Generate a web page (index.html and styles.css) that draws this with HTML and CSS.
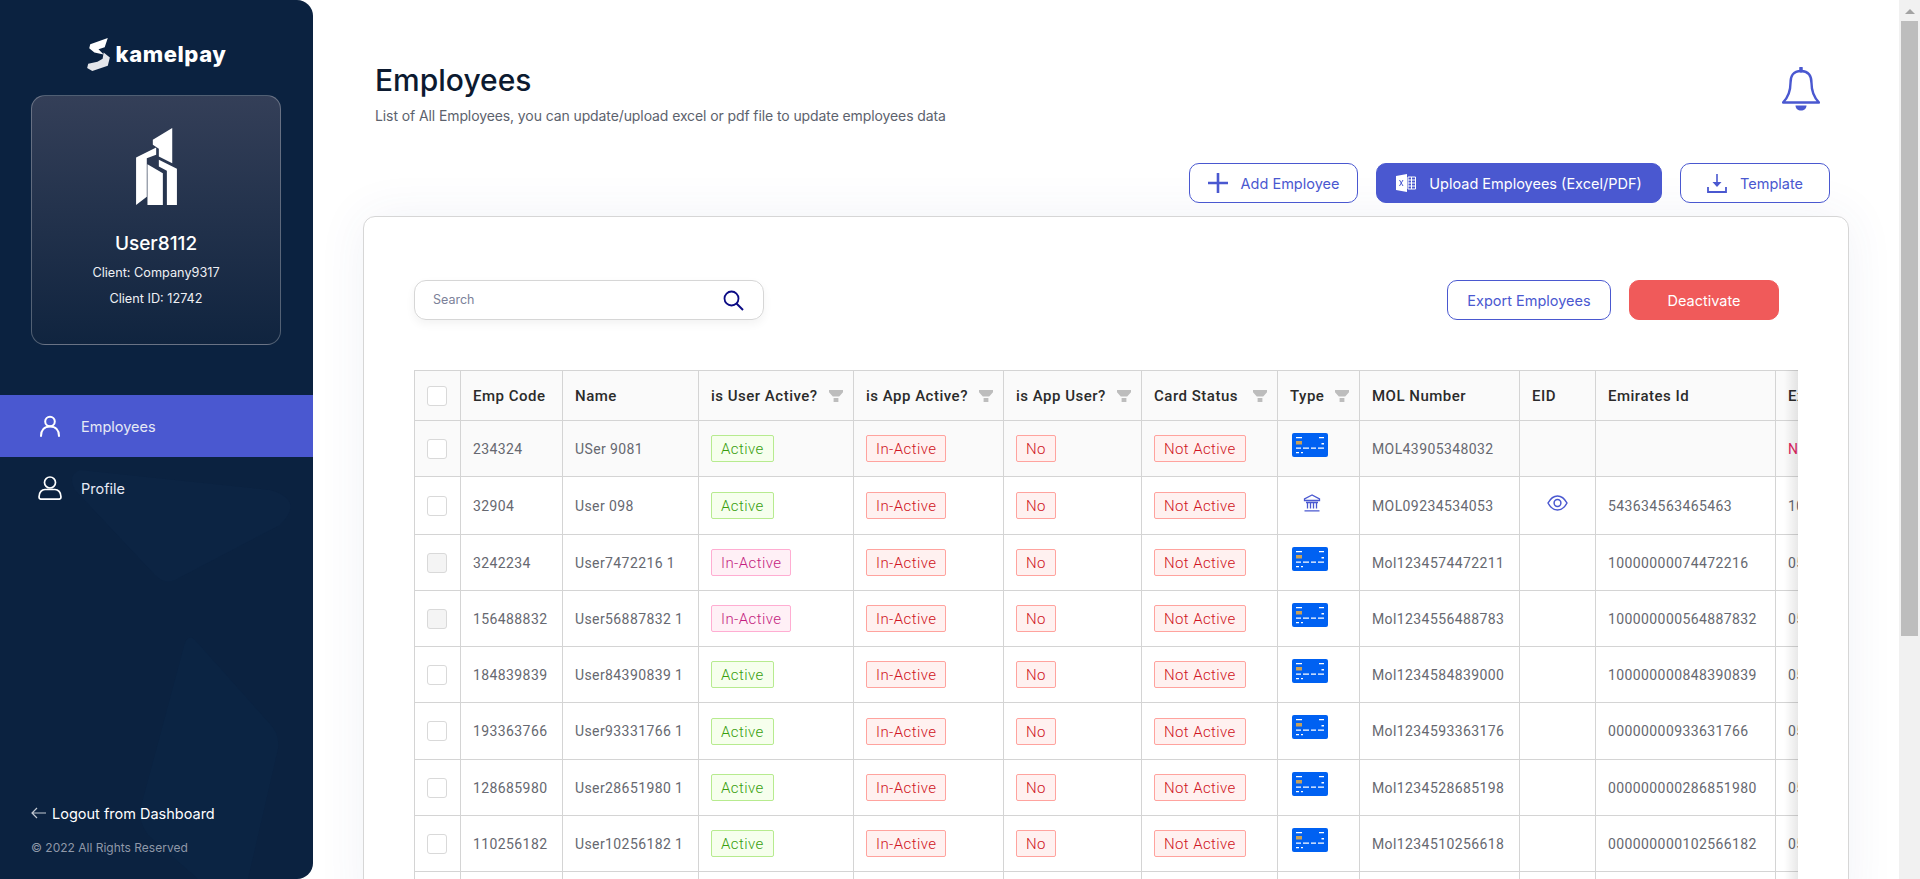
FILE: index.html
```html
<!DOCTYPE html>
<html lang="en">
<head>
  <meta charset="UTF-8">
  <title>Employees - kamelpay</title>
  <link rel="stylesheet" href="styles.css">
</head>
<body>
  <svg class="icon-defs" aria-hidden="true">
    <symbol id="funnel" viewBox="0 0 14 12"><path d="M0 0h14v2.2L10.2 6.6H3.8L0 2.2zM4.6 8h4.8v4H4.6z" fill="#bdbdbd"/></symbol>
    <symbol id="card" viewBox="0 0 36 24">
      <rect width="36" height="24" rx="2" fill="#0061f2"/>
      <path d="M4 4h6v1.2H4zM27 4h5v1.2h-5zM29.500 10h2.500v1.500h-2.500zM4 14.500h5v1.200H4zM11 14.500h6v1.200h-6zM19 14.500h5v1.200h-5zM26 14.500h6v1.200h-6zM4 19h3v1.200H4zM9 19h2v1.200H9z" fill="#fff"/>
      <rect x="4" y="8" width="6" height="3.500" fill="#c9a158"/>
    </symbol>
    <symbol id="bank" viewBox="0 0 18 18">
      <path d="M9 1 1.500 5v1.500h15V5zM3 8.500h12M4.500 8.500v6M7.500 8.500v6M10.500 8.500v6M13.500 8.500v6M1.500 16.800h15" fill="none" stroke="#4a58d0" stroke-width="1.300"/>
    </symbol>
    <symbol id="eye" viewBox="0 0 21 16">
      <path d="M1 8c2.500-4.500 5.700-7 9.500-7s7 2.500 9.500 7c-2.500 4.500-5.700 7-9.500 7S3.500 12.500 1 8z" fill="none" stroke="#4a58d0" stroke-width="1.500"/>
      <circle cx="10.500" cy="8" r="3.400" fill="none" stroke="#4a58d0" stroke-width="1.500"/>
    </symbol>
  </svg>

  <div class="app">
    <aside class="sidebar">
      <svg class="sidebar-bg" viewBox="0 0 313 879" aria-hidden="true">
        <path d="M80 470 270 490q35 10 10 35L175 580q-10 5-20-5L75 490q-8-15 5-20z" fill="#0c2443"/>
        <path d="M195 640q-8-8-12 10L140 810q-2 10 8 25l50 44h50l30-130q2-15-8-25z" fill="#0b2443"/>
      </svg>
      <div class="logo">
        <svg class="logo-mark" viewBox="0 0 22 32">
          <path d="M3 6 20 0l-3 9-6 2 5 5-9-2-5-4z" fill="#fff"/>
          <path d="M16 14l6 5-2 8-15 5-5-3 1-4 9-2 5-3z" fill="#e4e6ea"/>
        </svg>
        <span class="logo-text">kamelpay</span>
      </div>

      <div class="user-card">
        <svg class="building" viewBox="0 0 122 230">
          <path d="M50 35 108 0v105L68 85V62L50 50z" fill="#fff"/>
          <path d="M0 88 60 58v22L32 90v115L0 230z" fill="#fff"/>
          <path d="M34 108l46 27v95H34z" fill="#fff"/>
          <path d="M68 95l54 27v108H92V128l-24-13z" fill="#fff"/>
        </svg>
        <div class="user-name">User8112</div>
        <div class="user-meta">Client: Company9317</div>
        <div class="user-meta">Client ID: 12742</div>
      </div>

      <nav class="nav">
        <a class="nav-item active">
          <svg class="nav-icon" viewBox="0 0 24 24">
            <circle cx="12" cy="7.500" r="4.800" fill="none" stroke="#fff" stroke-width="2"/>
            <path d="M3 22c0-6 3.500-9.500 9-9.500s9 3.500 9 9.500" fill="none" stroke="#fff" stroke-width="2" stroke-linecap="round"/>
          </svg>
          Employees
        </a>
        <a class="nav-item">
          <svg class="nav-icon" viewBox="0 0 24 24">
            <circle cx="12" cy="6.500" r="5.500" fill="none" stroke="#fff" stroke-width="1.700"/>
            <path d="M1 21c0-5 3-7.500 6-7.500h10c3 0 6 2.500 6 7.500 0 1.500-1 2.200-2 2.200H3c-1 0-2-.7-2-2.200z" fill="none" stroke="#fff" stroke-width="1.700"/>
          </svg>
          Profile
        </a>
      </nav>

      <div class="sidebar-foot">
        <a class="logout">
          <svg class="logout-arrow" viewBox="0 0 15 12"><path d="M6 1 1 6l5 5M1 6h14" fill="none" stroke="#c4c9d2" stroke-width="1.200"/></svg>
          Logout from Dashboard
        </a>
        <div class="copyright">© 2022 All Rights Reserved</div>
      </div>
    </aside>

    <main class="main">
      <div class="page-head">
        <div>
          <h1>Employees</h1>
          <p>List of All Employees, you can update/upload excel or pdf file to update employees data</p>
        </div>
        <svg class="bell" viewBox="0 0 38 44">
          <path d="M19 4C11 4 8.500 9 8.500 16c0 8-2 14-7.500 19.500h36C31.500 30 29.500 24 29.500 16 29.500 9 27 4 19 4z" fill="none" stroke="#4a58d0" stroke-width="2.400" stroke-linejoin="round"/>
          <path d="M19 1v3" stroke="#4a58d0" stroke-width="3.500" stroke-linecap="round"/>
          <path d="M13.500 38.500h11c0 3-2.500 5-5.500 5s-5.500-2-5.500-5z" fill="#4a58d0"/>
        </svg>
      </div>

      <div class="page-actions">
        <button class="btn btn-add">
          <svg class="btn-icon" viewBox="0 0 20 20"><path d="M10 0v20M0 10h20" stroke="#4a58d0" stroke-width="2.600"/></svg>
          Add Employee
        </button>
        <button class="btn btn-upload">
          <svg class="btn-icon" viewBox="0 0 20 20">
            <path d="M0 3 11 1v18L0 17z" fill="#fff"/>
            <path d="M3.500 7l3.500 6M7 7l-3.500 6" stroke="#4a58d0" stroke-width="1"/>
            <path d="M12 4h7.500v12H12zM12 7h7.500M12 10h7.500M12 13h7.500M15.500 4v12" fill="none" stroke="#fff" stroke-width="1"/>
          </svg>
          Upload Employees (Excel/PDF)
        </button>
        <button class="btn btn-template">
          <svg class="btn-icon" viewBox="0 0 20 20">
            <path d="M10 1v10" stroke="#4a58d0" stroke-width="1.600"/>
            <path d="M5.500 9h9L10 14z" fill="#4a58d0"/>
            <path d="M1 14v5h18v-5" fill="none" stroke="#4a58d0" stroke-width="1.800"/>
          </svg>
          Template
        </button>
      </div>

      <section class="panel">
        <div class="toolbar">
          <div class="search">
            <input type="text" placeholder="Search">
            <svg class="search-icon" viewBox="0 0 21 21">
              <circle cx="8.500" cy="8.500" r="7" fill="none" stroke="#0b0b85" stroke-width="1.800"/>
              <path d="M13.500 13.500 20 20" stroke="#0b0b85" stroke-width="2"/>
            </svg>
          </div>
          <div class="toolbar-actions">
            <button class="btn btn-export">Export Employees</button>
            <button class="btn btn-danger">Deactivate</button>
          </div>
        </div>

        <div class="table-wrap">
          <table class="emp-table">
            <colgroup>
              <col class="c-check"><col class="c-code"><col class="c-name"><col class="c-user"><col class="c-app"><col class="c-appuser"><col class="c-status"><col class="c-type"><col class="c-mol"><col class="c-eid"><col class="c-emirates"><col class="c-expiry">
            </colgroup>
            <thead>
              <tr>
                <th><span class="check"></span></th>
                <th>Emp Code</th>
                <th>Name</th>
                <th><div class="th-filter">is User Active?<svg class="funnel"><use href="#funnel"/></svg></div></th>
                <th><div class="th-filter">is App Active?<svg class="funnel"><use href="#funnel"/></svg></div></th>
                <th><div class="th-filter">is App User?<svg class="funnel"><use href="#funnel"/></svg></div></th>
                <th><div class="th-filter">Card Status<svg class="funnel"><use href="#funnel"/></svg></div></th>
                <th><div class="th-filter">Type<svg class="funnel"><use href="#funnel"/></svg></div></th>
                <th>MOL Number</th>
                <th>EID</th>
                <th>Emirates Id</th>
                <th>Expiry Date</th>
              </tr>
            </thead>
            <tbody>
              <tr class="row-shaded">
                <td><span class="check"></span></td>
                <td>234324</td>
                <td>USer 9081</td>
                <td><span class="tag tag-green">Active</span></td>
                <td><span class="tag tag-red">In-Active</span></td>
                <td><span class="tag tag-red">No</span></td>
                <td><span class="tag tag-red">Not Active</span></td>
                <td><svg class="card-icon"><use href="#card"/></svg></td>
                <td>MOL43905348032</td>
                <td></td>
                <td></td>
                <td class="missing">Not Added</td>
              </tr>
              <tr>
                <td><span class="check"></span></td>
                <td>32904</td>
                <td>User 098</td>
                <td><span class="tag tag-green">Active</span></td>
                <td><span class="tag tag-red">In-Active</span></td>
                <td><span class="tag tag-red">No</span></td>
                <td><span class="tag tag-red">Not Active</span></td>
                <td><svg class="bank-icon"><use href="#bank"/></svg></td>
                <td>MOL09234534053</td>
                <td class="eid-cell"><svg class="eye-icon"><use href="#eye"/></svg></td>
                <td>543634563465463</td>
                <td>10/05/2025</td>
              </tr>
              <tr>
                <td><span class="check disabled"></span></td>
                <td>3242234</td>
                <td>User7472216 1</td>
                <td><span class="tag tag-pink">In-Active</span></td>
                <td><span class="tag tag-red">In-Active</span></td>
                <td><span class="tag tag-red">No</span></td>
                <td><span class="tag tag-red">Not Active</span></td>
                <td><svg class="card-icon"><use href="#card"/></svg></td>
                <td>Mol1234574472211</td>
                <td></td>
                <td>10000000074472216</td>
                <td>05/05/2025</td>
              </tr>
              <tr>
                <td><span class="check disabled"></span></td>
                <td>156488832</td>
                <td>User56887832 1</td>
                <td><span class="tag tag-pink">In-Active</span></td>
                <td><span class="tag tag-red">In-Active</span></td>
                <td><span class="tag tag-red">No</span></td>
                <td><span class="tag tag-red">Not Active</span></td>
                <td><svg class="card-icon"><use href="#card"/></svg></td>
                <td>Mol1234556488783</td>
                <td></td>
                <td>100000000564887832</td>
                <td>05/05/2025</td>
              </tr>
              <tr>
                <td><span class="check"></span></td>
                <td>184839839</td>
                <td>User84390839 1</td>
                <td><span class="tag tag-green">Active</span></td>
                <td><span class="tag tag-red">In-Active</span></td>
                <td><span class="tag tag-red">No</span></td>
                <td><span class="tag tag-red">Not Active</span></td>
                <td><svg class="card-icon"><use href="#card"/></svg></td>
                <td>Mol1234584839000</td>
                <td></td>
                <td>100000000848390839</td>
                <td>05/05/2025</td>
              </tr>
              <tr>
                <td><span class="check"></span></td>
                <td>193363766</td>
                <td>User93331766 1</td>
                <td><span class="tag tag-green">Active</span></td>
                <td><span class="tag tag-red">In-Active</span></td>
                <td><span class="tag tag-red">No</span></td>
                <td><span class="tag tag-red">Not Active</span></td>
                <td><svg class="card-icon"><use href="#card"/></svg></td>
                <td>Mol1234593363176</td>
                <td></td>
                <td>00000000933631766</td>
                <td>05/05/2025</td>
              </tr>
              <tr>
                <td><span class="check"></span></td>
                <td>128685980</td>
                <td>User28651980 1</td>
                <td><span class="tag tag-green">Active</span></td>
                <td><span class="tag tag-red">In-Active</span></td>
                <td><span class="tag tag-red">No</span></td>
                <td><span class="tag tag-red">Not Active</span></td>
                <td><svg class="card-icon"><use href="#card"/></svg></td>
                <td>Mol1234528685198</td>
                <td></td>
                <td>000000000286851980</td>
                <td>05/05/2025</td>
              </tr>
              <tr>
                <td><span class="check"></span></td>
                <td>110256182</td>
                <td>User10256182 1</td>
                <td><span class="tag tag-green">Active</span></td>
                <td><span class="tag tag-red">In-Active</span></td>
                <td><span class="tag tag-red">No</span></td>
                <td><span class="tag tag-red">Not Active</span></td>
                <td><svg class="card-icon"><use href="#card"/></svg></td>
                <td>Mol1234510256618</td>
                <td></td>
                <td>000000000102566182</td>
                <td>05/05/2025</td>
              </tr>
              <tr>
                <td></td><td></td><td></td><td></td><td></td><td></td><td></td><td></td><td></td><td></td><td></td><td></td>
              </tr>
            </tbody>
          </table>
        </div>
      </section>
    </main>

    <div class="scrollbar">
      <span class="scroll-arrow"></span>
      <span class="scroll-thumb"></span>
    </div>
  </div>
</body>
</html>
```

FILE: styles.css
```css
* {
  box-sizing: border-box;
}

html, body {
  margin: 0;
  padding: 0;
  height: 100%;
  overflow: hidden;
}

body {
  font-family: Inter, "Liberation Sans", sans-serif;
  background: #fff;
  color: #333;
}

.icon-defs {
  display: none;
}

.app {
  display: flex;
  height: 100vh;
}

/* sidebar */
.sidebar {
  position: relative;
  flex: 0 0 313px;
  display: flex;
  flex-direction: column;
  background: #0b2240;
  border-radius: 0 16px 16px 0;
  overflow: hidden;
  color: #fff;
}

.sidebar-bg {
  position: absolute;
  top: 0;
  left: 0;
  width: 313px;
  height: 879px;
}

.logo {
  position: relative;
  display: flex;
  align-items: center;
  justify-content: center;
  gap: 5px;
  height: 95px;
  padding: 13px 0 0 1px;
}

.logo-mark {
  width: 23px;
  height: 33px;
}

.logo-text {
  font-size: 22px;
  font-weight: 800;
  letter-spacing: 0.6px;
}

.user-card {
  position: relative;
  width: 250px;
  height: 250px;
  margin-left: 31px;
  padding-top: 32px;
  text-align: center;
  border: 1px solid rgba(255, 255, 255, 0.27);
  border-radius: 14px;
  background: linear-gradient(to bottom, #343f58, #10243f);
}

.building {
  display: block;
  width: 41px;
  height: 77px;
  margin: 0 auto 27px 104px;
}

.user-name {
  font-size: 19px;
  font-weight: 500;
  line-height: 24px;
  margin-bottom: 7px;
}

.user-meta {
  font-size: 12.700px;
  line-height: 20px;
  margin-bottom: 6px;
  color: #eef0f4;
}

.nav {
  position: relative;
  margin-top: 50px;
}

.nav-item {
  display: flex;
  align-items: center;
  height: 62px;
  padding-left: 38px;
  font-size: 14.500px;
  color: #e6e9f5;
}

.nav-item.active {
  background: #4a58d0;
}

.nav-icon {
  width: 24px;
  height: 24px;
  margin-right: 19px;
}

.sidebar-foot {
  position: relative;
  margin-top: auto;
  padding: 0 0 22px 31px;
}

.logout {
  display: flex;
  align-items: center;
  gap: 6px;
  height: 22px;
  margin-bottom: 15px;
  font-size: 14.500px;
  font-weight: 400;
}

.logout-arrow {
  width: 15px;
  height: 12px;
}

.copyright {
  font-size: 12px;
  line-height: 18px;
  color: #8f98a8;
}

/* main */
.main {
  flex: 1;
  min-width: 0;
  padding: 60px 50px 0;
  overflow: hidden;
}

.page-head {
  display: flex;
  justify-content: space-between;
  align-items: flex-start;
  height: 68px;
  padding: 0 29px 0 12px;
}

.page-head h1 {
  margin: 0 0 4px;
  font-size: 30px;
  font-weight: 500;
  line-height: 40px;
  color: #0c1a30;
}

.page-head p {
  margin: 0;
  font-size: 14px;
  line-height: 24px;
  letter-spacing: -0.1px;
  color: #5c626d;
}

.bell {
  width: 38px;
  height: 44px;
  margin-top: 7px;
}

.page-actions {
  display: flex;
  justify-content: flex-end;
  gap: 18px;
  margin: 35px 19px 13px 0;
}

.btn {
  display: flex;
  align-items: center;
  justify-content: center;
  height: 40px;
  padding: 0;
  border: 1px solid #4a58d0;
  border-radius: 10px;
  background: #fff;
  color: #4a58d0;
  font-family: inherit;
  font-size: 14.500px;
  font-weight: 400;
  cursor: pointer;
}

.btn-icon {
  width: 20px;
  height: 20px;
  margin-right: 13px;
}

.btn-add {
  width: 169px;
}

.btn-upload {
  width: 286px;
  background: #4a58d0;
  color: #fff;
}

.btn-template {
  width: 150px;
}

.btn-export {
  width: 164px;
}

.btn-danger {
  width: 150px;
  border-color: #f05a5a;
  background: #f05a5a;
  color: #fff;
}

.panel {
  padding: 63px 50px 0;
  height: 700px;
  background: #fff;
  border: 1px solid #d6d6d6;
  border-radius: 12px;
  box-shadow: 0 0 50px rgba(60, 70, 140, 0.07);
}

.toolbar {
  display: flex;
  justify-content: space-between;
  margin-bottom: 50px;
}

.toolbar-actions {
  display: flex;
  gap: 18px;
  margin-right: 19px;
}

.search {
  display: flex;
  align-items: center;
  width: 350px;
  height: 40px;
  padding: 0 19px 0 18px;
  border: 1px solid #d6d6d6;
  border-radius: 12px;
  box-shadow: 0 4px 10px rgba(0, 0, 0, 0.05);
}

.search input {
  flex: 1;
  min-width: 0;
  padding: 0 0 2px;
  border: none;
  outline: none;
  font-family: inherit;
  font-size: 12.500px;
}

.search input::placeholder {
  color: #7c8199;
}

.search-icon {
  width: 21px;
  height: 21px;
}

/* table */
.table-wrap {
  position: relative;
  width: 1384px;
  overflow: hidden;
}

.table-wrap::after {
  content: "";
  position: absolute;
  top: 0;
  right: 0;
  bottom: 0;
  width: 14px;
  background: linear-gradient(to right, rgba(0, 0, 0, 0), rgba(0, 0, 0, 0.09));
}

.emp-table {
  table-layout: fixed;
  width: 1511px;
  border-collapse: collapse;
  font-family: Roboto, sans-serif;
  font-size: 14px;
  letter-spacing: 0.4px;
}

.c-check { width: 46px; }
.c-code { width: 102px; }
.c-name { width: 136px; }
.c-user { width: 155px; }
.c-app { width: 150px; }
.c-appuser { width: 138px; }
.c-status { width: 136px; }
.c-type { width: 82px; }
.c-mol { width: 160px; }
.c-eid { width: 76px; }
.c-emirates { width: 180px; }
.c-expiry { width: 150px; }

.emp-table th,
.emp-table td {
  padding: 0 0 0 12px;
  border: 1px solid #d4d4d4;
  text-align: left;
  white-space: nowrap;
  overflow: hidden;
}

.emp-table th {
  height: 50px;
  background: #fafafa;
  font-size: 15px;
  font-weight: 500;
  letter-spacing: 0.5px;
  color: #2b2b2b;
}

.emp-table tbody tr {
  height: 56px;
}

.emp-table tbody tr:nth-child(2) {
  height: 58px;
}

.emp-table tbody tr:nth-child(6) {
  height: 57px;
}

.emp-table td {
  color: #666870;
}

.row-shaded td {
  background: #fafafa;
}

.emp-table td.missing {
  color: #e0245e;
}

.emp-table td.eid-cell {
  padding: 0;
  text-align: center;
}

.th-filter {
  display: flex;
  align-items: center;
  justify-content: space-between;
  padding-right: 10px;
}

.funnel {
  width: 14px;
  height: 12px;
}

.check {
  display: block;
  width: 20px;
  height: 20px;
  background: #fff;
  border: 1px solid #d9d9d9;
  border-radius: 3px;
}

.check.disabled {
  background: #f4f4f4;
}

.tag {
  display: inline-block;
  height: 27px;
  padding: 0 9px;
  border: 1px solid;
  border-radius: 2px;
  font-size: 15px;
  font-weight: 300;
  line-height: 26px;
  vertical-align: middle;
}

.tag-green {
  background: #f6ffed;
  border-color: #b7eb8f;
  color: #389e0d;
}

.tag-red {
  background: #fff1f0;
  border-color: #ffa39e;
  color: #cf1322;
}

.tag-pink {
  background: #fff0f6;
  border-color: #ffadd2;
  color: #c41d7f;
}

.card-icon {
  display: block;
  width: 36px;
  height: 24px;
  margin: -8px 0 0 2px;
}

.bank-icon {
  display: block;
  width: 18px;
  height: 18px;
  margin: -6px 0 0 13px;
}

.eye-icon {
  display: block;
  width: 21px;
  height: 16px;
  margin: -6px auto 0;
}

/* fake browser scrollbar */
.scrollbar {
  flex: 0 0 21px;
  display: flex;
  flex-direction: column;
  align-items: center;
  background: #f1f1f1;
}

.scroll-arrow {
  width: 0;
  height: 0;
  margin: 9px 0 7px;
  border-left: 5px solid transparent;
  border-right: 5px solid transparent;
  border-bottom: 5px solid #a3a3a3;
}

.scroll-thumb {
  width: 17px;
  height: 615px;
  background: #bdbdbd;
}
```
